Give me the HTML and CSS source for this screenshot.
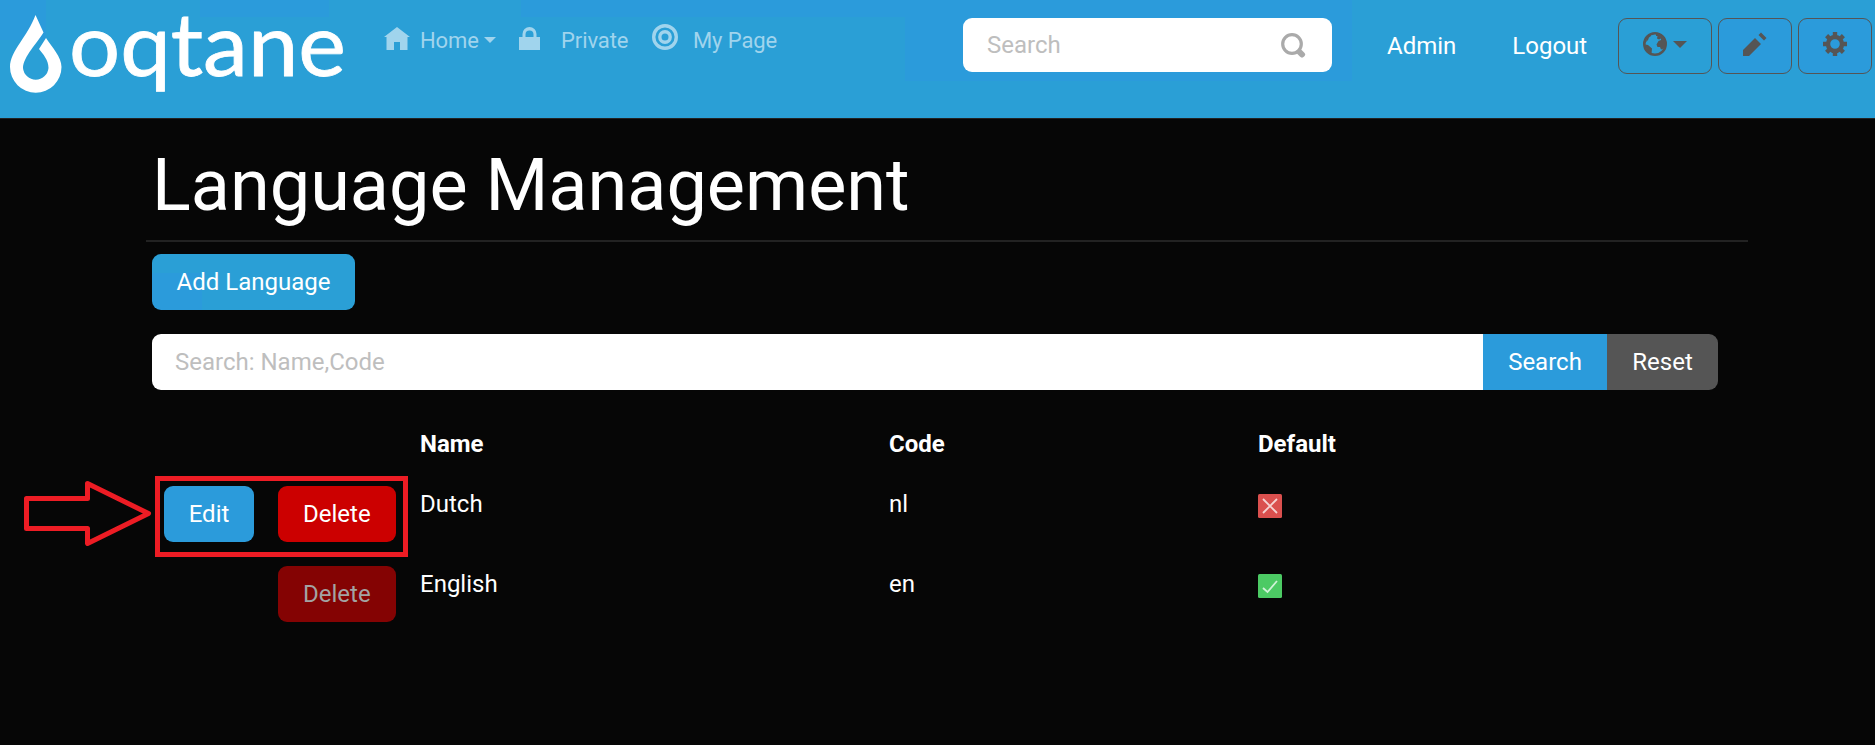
FILE: index.html
```html
<!DOCTYPE html>
<html lang="en">
<head>
<meta charset="utf-8">
<title>Language Management</title>
<link rel="stylesheet" href="styles.css">
</head>
<body>
<header class="topbar">
  <a class="brand" aria-label="oqtane">
    <svg class="logo" width="350" height="110" viewBox="0 0 350 110">
      <g fill="#fff">
        <path d="M35.500 15 L43.500 32.500 C38 42 23 57 23 68 A12.800 12.800 0 0 0 48.500 68 C48.500 60 43 54 39 49 L46 38 C52 47 61.500 57 61.500 67 A25.700 25.700 0 0 1 10 67 C10 51 28 36 35.500 15Z"/>
        <text class="brand-text" x="69" y="76" textLength="277" lengthAdjust="spacingAndGlyphs">oqtane</text>
      </g>
    </svg>
  </a>
  <nav class="nav">
    <a class="nav-link home"><svg class="nav-icon" width="26" height="24" viewBox="0 0 26 24"><path fill="currentColor" d="M13 0 26 10H23.500V23H16V15H10V23H2.500V10H0Z"/></svg>Home<i class="caret"></i></a>
    <a class="nav-link private"><svg class="nav-icon" width="21" height="24" viewBox="0 0 21 24"><path fill="currentColor" d="M0 10H3.500V7A7 7 0 0 1 17.500 7V10H21V23H0ZM6.500 10H14.500V7.500A4 4 0 0 0 6.500 7.500Z"/></svg>Private</a>
    <a class="nav-link page"><svg class="nav-icon" width="26" height="28" viewBox="0 0 26 28"><g fill="none" stroke="currentColor"><circle cx="13" cy="13" r="11.300" stroke-width="3.400"/><circle cx="13" cy="13" r="5.200" stroke-width="3.400"/></g></svg>My Page</a>
  </nav>
  <div class="site-search">
    <span>Search</span>
    <svg width="25" height="26" viewBox="0 0 25 26"><g fill="none" stroke="#aaa"><circle cx="11" cy="12" r="9.300" stroke-width="3.200"/><path d="M18.500 20 21 22.500" stroke-width="6" stroke-linecap="round"/></g></svg>
  </div>
  <div class="account"><a>Admin</a><a>Logout</a></div>
  <div class="tools">
    <button class="tool wide"><svg width="24" height="24" viewBox="0 0 24 24"><circle cx="12" cy="12" r="10.700" fill="none" stroke="currentColor" stroke-width="2.600"/><path fill="currentColor" d="M2 12.500 5 13 9 16.500 8.500 22 4 19ZM4 5 8 1.500 8 4 6 5.500 5 8 3 10ZM13 1H16L21 5 23 11 22 16 18 17.500 17 15 14.500 15 13.500 12.500 15.500 9 18 8 18 6.500 16 7.500 14 6.500 14.500 4 13 4Z"/></svg><i class="caret"></i></button>
    <button class="tool"><svg width="24" height="24" viewBox="0 0 24 24"><path fill="currentColor" d="M0 24V18L12 6 18 12 6 24ZM15.500 3 18 .5 23.500 6 21 8.500Z"/></svg></button>
    <button class="tool"><svg width="24" height="24" viewBox="0 0 24 24"><g fill="none" stroke="currentColor"><circle cx="12" cy="12" r="7" stroke-width="4.400"/><path stroke-width="4.400" d="M12 0V4M12 20V24M0 12H4M20 12H24M3.600 3.600 6.500 6.500M17.500 17.500 20.400 20.400M3.600 20.400 6.500 17.500M17.500 6.500 20.400 3.600"/></g></svg></button>
  </div>
</header>
<main class="content">
  <h1 class="title">Language Management</h1>
  <hr class="rule">
  <div class="body">
    <button class="btn add">Add Language</button>
    <div class="filter">
      <div class="filter-input">Search: Name,Code</div>
      <button class="btn filter-search">Search</button>
      <button class="btn filter-reset">Reset</button>
    </div>
    <div class="grid">
      <div class="row head"><span></span><span></span><span>Name</span><span>Code</span><span>Default</span></div>
      <div class="row">
        <button class="btn edit">Edit</button><button class="btn danger">Delete</button>
        <span>Dutch</span><span>nl</span>
        <svg class="mark" width="24" height="24" viewBox="0 0 24 24"><rect width="24" height="24" rx="1.500" fill="#da504e"/><path d="M5 5 19 19M19 5 5 19" stroke="#f5d3d2" stroke-width="1.800"/></svg>
      </div>
      <div class="row">
        <span></span><button class="btn danger disabled">Delete</button>
        <span>English</span><span>en</span>
        <svg class="mark" width="24" height="24" viewBox="0 0 24 24"><rect width="24" height="24" rx="1.500" fill="#4cca64"/><path d="M5 14 9.500 18 19 7" fill="none" stroke="#d0f2d7" stroke-width="1.800"/></svg>
      </div>
      <svg class="callout" width="386" height="84" viewBox="0 0 386 84"><g fill="none" stroke="#ed1c24" stroke-width="5"><path stroke-linejoin="round" d="M2.500 22.500H63.500V7.500L124.500 37.500 63.500 67.500V52.500H2.500Z"/><rect x="133.500" y="2.500" width="248" height="76"/></g></svg>
    </div>
  </div>
</main>
</body>
</html>
```
FILE: styles.css
```css
* { box-sizing: border-box; }
body {
  margin: 0;
  height: 745px;
  overflow: hidden;
  background: #060606;
  color: #fff;
  font: 24px/36px Roboto, sans-serif;
}
button { font: inherit; margin: 0; }
.topbar {
  display: flex;
  align-items: flex-start;
  height: 119px;
  background:
    linear-gradient(#2b9bdb, #2b9bdb) 0 0 / 46px 40px no-repeat,
    linear-gradient(#2b9bdb, #2b9bdb) 200px 0 / 129px 17px no-repeat,
    linear-gradient(#2b9bdb, #2b9bdb) 521px 0 / 384px 17px no-repeat,
    linear-gradient(#2b9bdb, #2b9bdb) 905px 0 / 447px 81px no-repeat,
    #2a9fd6;
  border-bottom: 1px solid #222;
}
.brand { display: flex; width: 384px; }
.logo { overflow: visible; }
.brand-text { font: 88px Lato, sans-serif; stroke: #fff; stroke-width: 0.8px; }
.nav { display: flex; width: 579px; padding-top: 23px; color: #a0d4ed; font-size: 22px; letter-spacing: -0.1px; }
.nav-link { display: flex; align-items: flex-start; white-space: nowrap; }
.home { width: 135px; }
.home .nav-icon { margin: 4px 10px 0 0; }
.private { width: 133px; }
.private .nav-icon { margin: 4px 21px 0 0; }
.page .nav-icon { margin: 1px 15px 0 0; }
.caret {
  margin: 14px 0 0 5px;
  border: 6px solid transparent;
  border-top-color: currentColor;
  border-bottom: 0;
}
.site-search {
  display: flex;
  justify-content: space-between;
  align-items: center;
  width: 369px;
  height: 54px;
  margin-top: 18px;
  padding: 0 26px 0 24px;
  border-radius: 9px;
  background: #fff;
  color: #bebebe;
}
.account { display: flex; gap: 56px; padding: 28px 0 0 55px; width: 286px; }
.tools { display: flex; gap: 6px; padding-top: 18px; }
.tool {
  display: flex;
  justify-content: center;
  width: 74px;
  height: 56px;
  padding: 13px 0 0;
  border: 1px solid #555;
  border-radius: 9px;
  background: #2b9bdb;
  color: #555;
}
.wide { width: 94px; background: none; }
.wide .caret { margin: 9px 0 0 6px; border-width: 7px 7px 0; }
.content { width: 1602px; margin-left: 146px; }
.title { margin: 0; padding: 24px 0 0 6px; font-size: 72px; line-height: 86px; font-weight: 400; white-space: nowrap; }
.rule { height: 2px; margin: 11px 0 12px; border: 0; background: #222; }
.body { width: 1572px; padding-left: 6px; }
.btn {
  height: 56px;
  padding: 0 25px;
  border: 0;
  border-radius: 9px;
  background: #2b9bdb;
  color: #fff;
  white-space: nowrap;
}
.edit { width: 90px; padding: 0; }
.add {
  display: block;
  width: 203px;
  padding: 0;
  background: linear-gradient(#2b9bdb, #2b9bdb) 0 19px / 50px 37px no-repeat, #2a9fd6;
}
.filter { display: flex; height: 56px; margin-top: 24px; }
.filter-input { flex: 1; padding: 10px 23px; border-radius: 9px 0 0 9px; background: #fff; color: #bebebe; }
.filter-search { width: 124px; border-radius: 0; }
.filter-reset { width: 111px; border-radius: 0 9px 9px 0; background: #555; }
.grid { position: relative; padding-top: 24px; }
.row {
  display: grid;
  grid-template-columns: 114px 142px 469px 369px 1fr;
  height: 80px;
  padding: 12px 0 0 12px;
  justify-items: start;
  align-items: start;
}
.head { height: 60px; font-weight: 700; }
.danger { background: #c00; }
.disabled { background: #840303; color: #a3a3a3; }
.mark { margin-top: 8px; }
.callout { position: absolute; left: -128px; top: 86px; }
```
